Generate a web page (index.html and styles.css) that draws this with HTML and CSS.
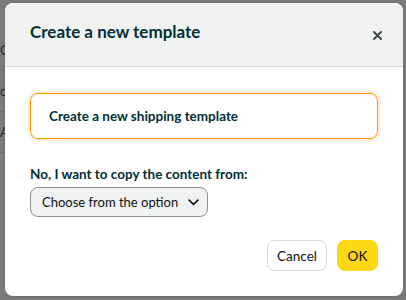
FILE: index.html
```html
<!DOCTYPE html>
<html>
<head>
<meta charset="utf-8">
<link rel="stylesheet" href="styles.css">
</head>
<body>
<div class="backdrop">
  <div class="bg-lines">
    <div class="bg-row">C</div>
    <div class="bg-row">o</div>
    <div class="bg-row">A</div>
  </div>
  <div class="modal">
    <div class="modal-header">
      <h1 class="title">Create a new template</h1>
      <button class="close" aria-label="Close">
        <svg width="9" height="9" viewBox="0 0 9 9"><path d="M1 1L8 8M8 1L1 8" stroke="#3a3f42" stroke-width="1.8" stroke-linecap="round"/></svg>
      </button>
    </div>
    <div class="modal-body">
      <div class="option-card">Create a new shipping template</div>
      <div class="copy-label">No, I want to copy the content from:</div>
      <div class="select">
        <span>Choose from the option</span>
        <svg width="11" height="7" viewBox="0 0 11 7"><path d="M1.2 1.2L5.5 5.5L9.8 1.2" fill="none" stroke="#0f1111" stroke-width="1.7" stroke-linecap="round" stroke-linejoin="round"/></svg>
      </div>
      <div class="actions">
        <button class="btn btn-cancel">Cancel</button>
        <button class="btn btn-ok">OK</button>
      </div>
    </div>
  </div>
</div>
</body>
</html>
```

FILE: styles.css
```css
html, body {
  margin: 0;
  padding: 0;
}
body {
  background: #7b7b7b;
  font-family: "Lato", "Liberation Sans", sans-serif;
  color: #002f36;
  width: 406px;
  height: 300px;
  overflow: hidden;
}
.backdrop {
  position: relative;
  width: 406px;
  height: 300px;
  padding: 3px 3px 0 5px;
  box-sizing: border-box;
}
.bg-lines {
  position: absolute;
  left: 0;
  top: 30px;
  width: 6px;
  color: #2b2b2b;
  font-size: 13px;
}
.bg-row {
  height: 40px;
  border-bottom: 1px solid #6c6c6c;
  display: flex;
  align-items: center;
}
.modal {
  position: relative;
  width: 398px;
  height: 293px;
  background: #fff;
  border-radius: 8px;
  overflow: hidden;
  box-shadow: 0 0 2px rgba(0,0,0,0.25);
}
.modal-header {
  height: 64px;
  background: #f0f2f2;
  border-bottom: 1px solid #d5d9d9;
  box-sizing: border-box;
  display: flex;
  align-items: center;
  justify-content: space-between;
  padding: 0 21px 6px 25px;
}
.title {
  margin: 0;
  font-size: 17px;
  font-weight: 700;
  color: #002f36;
}
.close {
  border: 0;
  background: none;
  padding: 0;
  margin-top: 8px;
  width: 10px;
  height: 10px;
  display: flex;
  align-items: center;
  justify-content: center;
}
.modal-body {
  padding: 26px 25px 0 25px;
}
.option-card {
  height: 46px;
  box-sizing: border-box;
  border: 1px solid #ff9900;
  border-radius: 8px;
  box-shadow: 0 0 3px 1px rgba(255, 153, 0, 0.35);
  display: flex;
  align-items: center;
  padding-left: 18px;
  font-size: 13.5px;
  font-weight: 700;
  color: #002f36;
}
.copy-label {
  margin-top: 27px;
  font-size: 13.5px;
  font-weight: 700;
  color: #002f36;
}
.select {
  margin-top: 5px;
  width: 178px;
  height: 30px;
  box-sizing: border-box;
  background: #f0f2f2;
  border: 1px solid #8d9096;
  border-radius: 8px;
  display: flex;
  align-items: center;
  justify-content: space-between;
  padding: 0 8px 0 11px;
  font-size: 13px;
  color: #0f1111;
  white-space: nowrap;
}
.actions {
  margin-top: 23px;
  display: flex;
  justify-content: flex-end;
  gap: 10px;
}
.btn {
  height: 31px;
  border-radius: 8px;
  font-family: inherit;
  font-size: 13.5px;
  color: #0f1111;
  padding: 0;
}
.btn-cancel {
  width: 60px;
  background: #fff;
  border: 1px solid #d5d9d9;
}
.btn-ok {
  width: 41px;
  background: #ffd814;
  border: 1px solid #ffd814;
}
```
